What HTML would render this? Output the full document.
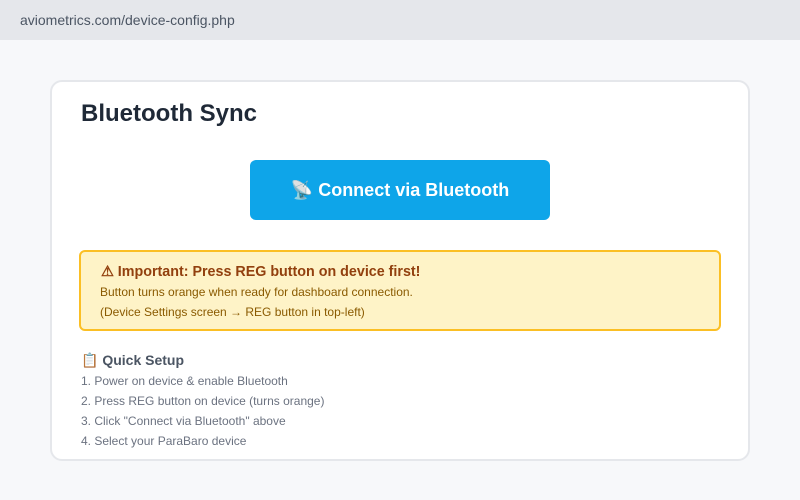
<!DOCTYPE html>
<html><head><style>
*{margin:0;padding:0;box-sizing:border-box}
body{width:800px;height:500px;background:#f7f8fa;font-family:"Liberation Sans",sans-serif;position:relative;overflow:hidden}
.bar{position:absolute;left:0;top:0;width:800px;height:40px;background:#e5e7eb;color:#4b5563;font-size:14px;line-height:40px;padding-left:20px}
.card{position:absolute;left:50px;top:80px;width:700px;height:381px;background:#fff;border:2px solid #e5e7eb;border-radius:12px}
h1{position:absolute;left:29px;top:18px;font-size:24px;color:#1f2937;font-weight:bold}
.btn{position:absolute;left:198px;top:78px;width:300px;height:60px;background:#0ea5e9;border-radius:6px;color:#fff;font-weight:bold;font-size:18px;text-align:center;line-height:60px}
.warn{position:absolute;left:27px;top:168px;width:642px;height:81px;background:#fef3c7;border:2px solid #fbbf24;border-radius:6px;color:#92400e}
.warn .t{position:absolute;left:20px;top:12px;font-size:14.3px;font-weight:bold}
.warn .l{position:absolute;left:19px;font-size:12px;color:#8a5a00}
.qs{position:absolute;left:29px;top:270px;font-size:14px;font-weight:bold;color:#4b5563}
.li{position:absolute;left:29px;font-size:12px;color:#6b7280}
</style></head><body>
<div class="bar">aviometrics.com/device-config.php</div>
<div class="card">
<h1>Bluetooth Sync</h1>
<div class="btn">📡 Connect via Bluetooth</div>
<div class="warn">
<div class="t">⚠ Important: Press REG button on device first!</div>
<div class="l" style="top:33px">Button turns orange when ready for dashboard connection.</div>
<div class="l" style="top:53px">(Device Settings screen → REG button in top-left)</div>
</div>
<div class="qs">📋 Quick Setup</div>
<div class="li" style="top:292px">1. Power on device &amp; enable Bluetooth</div>
<div class="li" style="top:312px">2. Press REG button on device (turns orange)</div>
<div class="li" style="top:332px">3. Click "Connect via Bluetooth" above</div>
<div class="li" style="top:352px">4. Select your ParaBaro device</div>
</div>
</body></html>
